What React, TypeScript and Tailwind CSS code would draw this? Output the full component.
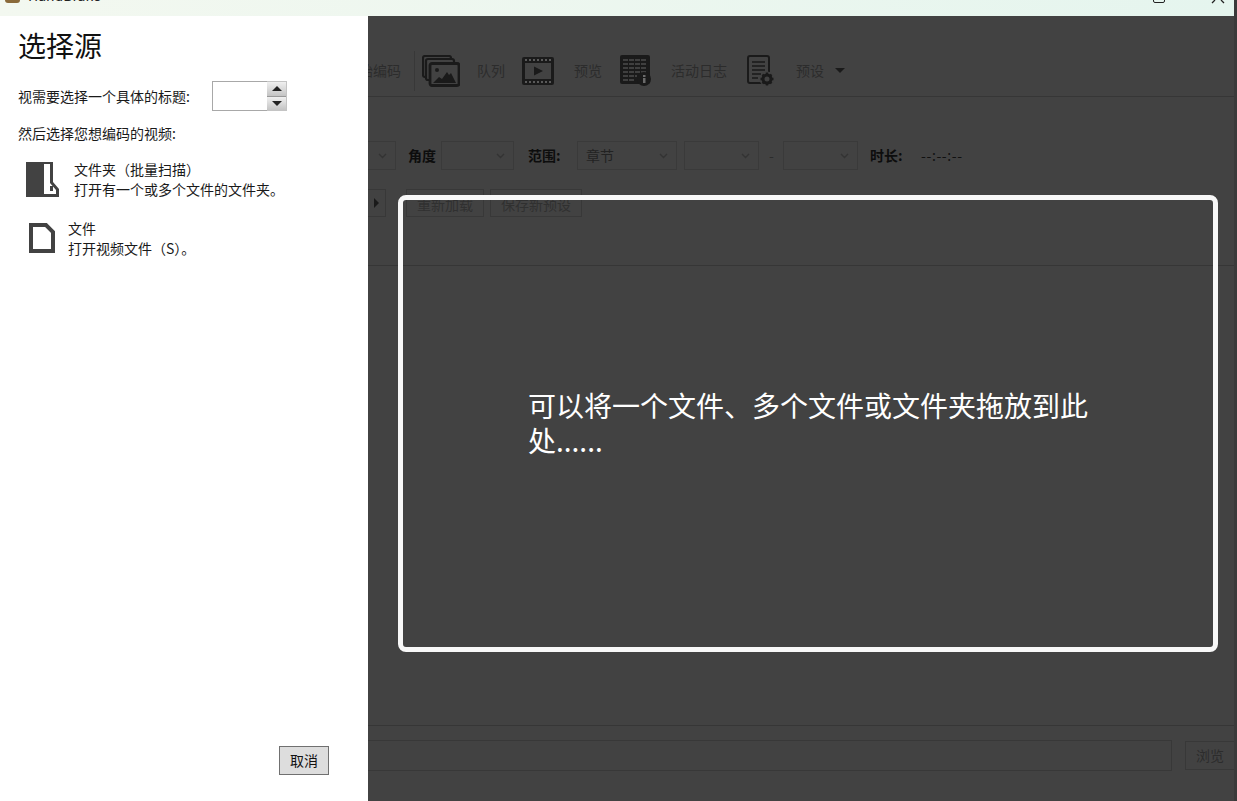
import React from 'react';

const Select = ({ className, text }: { className: string; text?: string }) => (
  <div className={`h-[29px] border border-[#3a3a3a] flex items-center justify-between pl-[8px] pr-[8px] text-[14px] text-[#222222] ${className}`}>
    <span>{text}</span>
    <svg width="9" height="6" viewBox="0 0 9 6" fill="none" stroke="#333333" strokeWidth="1.4"><path d="M1 1l3.5 3.5L8 1" /></svg>
  </div>
);

const QueueIcon = () => (
  <svg width="38" height="32" viewBox="0 0 38 32" fill="none" stroke="#1a1a1a" strokeWidth="2.200" className="ml-[7px] shrink-0">
    <rect x="1" y="1" width="28" height="21" rx="2" />
    <rect x="4" y="4" width="28" height="21" rx="2" fill="#424242" />
    <rect x="8" y="8.500" width="29" height="22" rx="2" fill="#424242" strokeWidth="2.800" />
    <circle cx="15" cy="15" r="2" fill="#1a1a1a" stroke="none" />
    <path d="M11 28l6-6 3 2 5-7 2 3 2-2 5 10z" fill="#1a1a1a" stroke="none" />
  </svg>
);

const PreviewIcon = () => (
  <svg width="32" height="28" viewBox="0 0 32 28" className="ml-[17px] shrink-0">
    <rect x="0" y="0" width="32" height="28" rx="2" fill="#1a1a1a" />
    <rect x="3" y="6" width="26" height="16" fill="#424242" />
    <path d="M3 3h2M7 3h2M11 3h2M15 3h2M19 3h2M23 3h2M27 3h2M3 25h2M7 25h2M11 25h2M15 25h2M19 25h2M23 25h2M27 25h2" stroke="#5a5a5a" strokeWidth="2" />
    <path d="M12 9.500l9 4.500-9 4.500z" fill="#1a1a1a" />
  </svg>
);

const LogIcon = () => (
  <svg width="32" height="31" viewBox="0 0 32 31" className="ml-[18px] shrink-0">
    <rect x="0" y="0" width="30" height="29" rx="2" fill="#1a1a1a" />
    <path d="M3 5h24M3 9h24M3 13h24M3 17h24M3 21h14M3 25h12" stroke="#4c4c4c" strokeWidth="1.500" strokeDasharray="5 1" />
    <circle cx="24" cy="24" r="7" fill="#1a1a1a" />
    <rect x="23" y="23" width="2.500" height="5" fill="#6a6a6a" />
    <rect x="23" y="20" width="2.500" height="2" fill="#6a6a6a" />
  </svg>
);

const PresetIcon = () => (
  <svg width="29" height="32" viewBox="0 0 29 32" className="ml-[20px] shrink-0">
    <rect x="1" y="1" width="21" height="27" rx="2" fill="#424242" stroke="#1a1a1a" strokeWidth="2" />
    <path d="M5 7h13M5 11h13M5 15h13M5 19h9M5 23h6" stroke="#1a1a1a" strokeWidth="1.500" />
    <circle cx="20" cy="24" r="7.500" fill="#424242" />
    <circle cx="20" cy="24" r="4" fill="none" stroke="#1a1a1a" strokeWidth="3" />
    <path d="M20 17.500v3M20 27.500v3M13.500 24h3M23.500 24h3M15.500 19.500l2 2M22.500 26.500l2 2M15.500 28.500l2-2M22.500 21.500l2-2" stroke="#1a1a1a" strokeWidth="2.400" />
  </svg>
);

const FolderIcon = () => (
  <svg width="33" height="35" viewBox="0 0 33 35" className="shrink-0">
    <path d="M0 0h27v20l6 7v8H0z" fill="#424242" />
    <path d="M18 2h6v19l6 7v4H18z" fill="#ffffff" />
    <rect x="24" y="24" width="3" height="5" fill="#424242" />
  </svg>
);

const FileIcon = () => (
  <svg width="26" height="30" viewBox="0 0 26 30" className="shrink-0">
    <path d="M2 2h15l7 7v19H2z" fill="#ffffff" stroke="#424242" strokeWidth="4" strokeLinejoin="miter" />
  </svg>
);

export default function App() {
  return (
    <div className="w-[1237px] h-[801px] overflow-hidden relative flex bg-[#3a3a3a] font-['Noto_Sans_CJK_SC','Liberation_Sans',sans-serif]">
      <div className="w-[1234px] h-full flex flex-col">
        {/* title bar, cut off by the top of the shot */}
        <div className="h-[16px] shrink-0 overflow-hidden flex items-start pl-[5px] bg-gradient-to-r from-[#f3f8f0] to-[#e5f5ee]">
          <div className="w-[15px] h-[3px] rounded-b-full bg-[#8a6a3a] shrink-0" />
          <span className="ml-[8px] -mt-[13px] text-[14px] leading-[16px] text-[#222222] shrink-0">HandBrake</span>
        </div>

        <div className="flex-1 flex min-h-0">
          {/* source picker */}
          <aside className="w-[368px] shrink-0 bg-white flex flex-col pl-[18px] pr-[39px] pb-[26px] text-[14px] text-[#1a1a1a]">
            <h1 className="text-[28px] leading-[40px] mt-[9px] text-[#111111]">选择源</h1>
            <div className="flex items-center mt-[16px]">
              <span className="w-[194px] shrink-0">视需要选择一个具体的标题:</span>
              <div className="w-[55px] h-[30px] border border-[#a8a8a8] border-r-0 bg-white" />
              <div className="w-[20px] h-[30px] flex flex-col border border-l-0 border-[#c4c4c4]">
                <div className="flex-1 bg-gradient-to-b from-[#f0f0f0] to-[#c4c4c4] flex items-center justify-center border-b border-[#999999]">
                  <div className="w-0 h-0 border-x-[5px] border-x-transparent border-b-[5px] border-b-[#222222]" />
                </div>
                <div className="flex-1 bg-gradient-to-b from-[#f0f0f0] to-[#c4c4c4] flex items-center justify-center">
                  <div className="w-0 h-0 border-x-[5px] border-x-transparent border-t-[5px] border-t-[#222222]" />
                </div>
              </div>
            </div>
            <p className="mt-[12px] leading-[20px]">然后选择您想编码的视频:</p>
            <div className="flex items-center mt-[16px] ml-[8px]">
              <FolderIcon />
              <div className="ml-[15px] leading-[20px]">
                <div>文件夹（批量扫描）</div>
                <div>打开有一个或多个文件的文件夹。</div>
              </div>
            </div>
            <div className="flex items-center mt-[19px] ml-[11px]">
              <FileIcon />
              <div className="ml-[13px] leading-[20px]">
                <div>文件</div>
                <div>打开视频文件（S）。</div>
              </div>
            </div>
            <button className="mt-auto self-end w-[50px] h-[29px] bg-[#dddddd] border border-[#707070] text-[14px] text-[#111111]">取消</button>
          </aside>

          {/* main window, dimmed */}
          <main className="flex-1 min-w-0 overflow-hidden bg-[#424242] flex flex-col text-[14px] text-[#2c2c2c]">
            <div className="h-[81px] shrink-0 border-b border-[#363636] flex items-center pt-[29px] whitespace-nowrap">
              <span className="ml-[-23px] w-[56px] shrink-0">开始编码</span>
              <div className="ml-[13px] w-px h-[40px] bg-[#383838] shrink-0" />
              <QueueIcon />
              <span className="ml-[17px]">队列</span>
              <PreviewIcon />
              <span className="ml-[20px]">预览</span>
              <LogIcon />
              <span className="ml-[19px]">活动日志</span>
              <PresetIcon />
              <span className="ml-[20px]">预设</span>
              <div className="ml-[11px] w-0 h-0 border-x-[5px] border-x-transparent border-t-[5px] border-t-[#1a1a1a]" />
            </div>

            <div className="flex items-center mt-[44px] h-[29px] whitespace-nowrap">
              <Select className="w-[29px] -ml-px" />
              <span className="ml-[12px] w-[30px] font-bold text-[#0d0d0d]">角度</span>
              <Select className="ml-[3px] w-[73px]" />
              <span className="ml-[14px] w-[37px] font-bold text-[#0d0d0d]">范围:</span>
              <Select className="ml-[12px] w-[100px]" text="章节" />
              <Select className="ml-[7px] w-[75px]" />
              <span className="ml-[10px] w-[14px]">-</span>
              <Select className="w-[75px]" />
              <span className="ml-[12px] w-[37px] font-bold text-[#0d0d0d]">时长:</span>
              <span className="ml-[14px] tracking-[0.6px] text-[#111111]">--:--:--</span>
            </div>

            <div className="flex items-center mt-[19px] h-[28px] whitespace-nowrap">
              <div className="w-[18px] h-[28px] border border-[#383838] border-l-0 flex items-center justify-center">
                <div className="w-0 h-0 border-y-[5px] border-y-transparent border-l-[5px] border-l-[#1a1a1a]" />
              </div>
              <button className="ml-[20px] w-[78px] h-[28px] pt-[3px] border border-[#383838] text-[#303030]">重新加载</button>
              <button className="ml-[6px] w-[92px] h-[28px] pt-[3px] border border-[#383838] text-[#303030]">保存新预设</button>
            </div>

            <div className="mt-[48px] border-t border-[#363636] flex-1" />

            <div className="h-[76px] shrink-0 border-t border-[#363636] flex items-start pt-[14px]">
              <div className="flex-1 h-[31px] border border-[#383838] border-l-0" />
              <button className="ml-[13px] w-[49px] h-[29px] mt-px border border-[#383838] border-r-0 text-[#2c2c2c]">浏览</button>
            </div>
          </main>
        </div>
      </div>

      {/* drop target laid over the dimmed window */}
      <div className="absolute left-[398px] top-[195px] w-[820px] h-[457px] border-[5px] border-[#f8f8f8] rounded-[8px] flex items-center pl-[125px] pb-[2px]">
        <p className="w-[565px] text-[28px] leading-[35px] text-white">可以将一个文件、多个文件或文件夹拖放到此处......</p>
      </div>

      {/* window buttons, cut off by the top of the shot */}
      <div className="absolute left-[1153px] top-[-8px] w-[12px] h-[11px] border-[1.5px] border-[#222222] rounded-[2px]" />
      <svg className="absolute left-[1211px] top-0" width="14" height="4" viewBox="0 0 14 4" fill="none" stroke="#222222" strokeWidth="1.300"><path d="M1 3L4 0M13 3L10 0" /></svg>
    </div>
  );
}
